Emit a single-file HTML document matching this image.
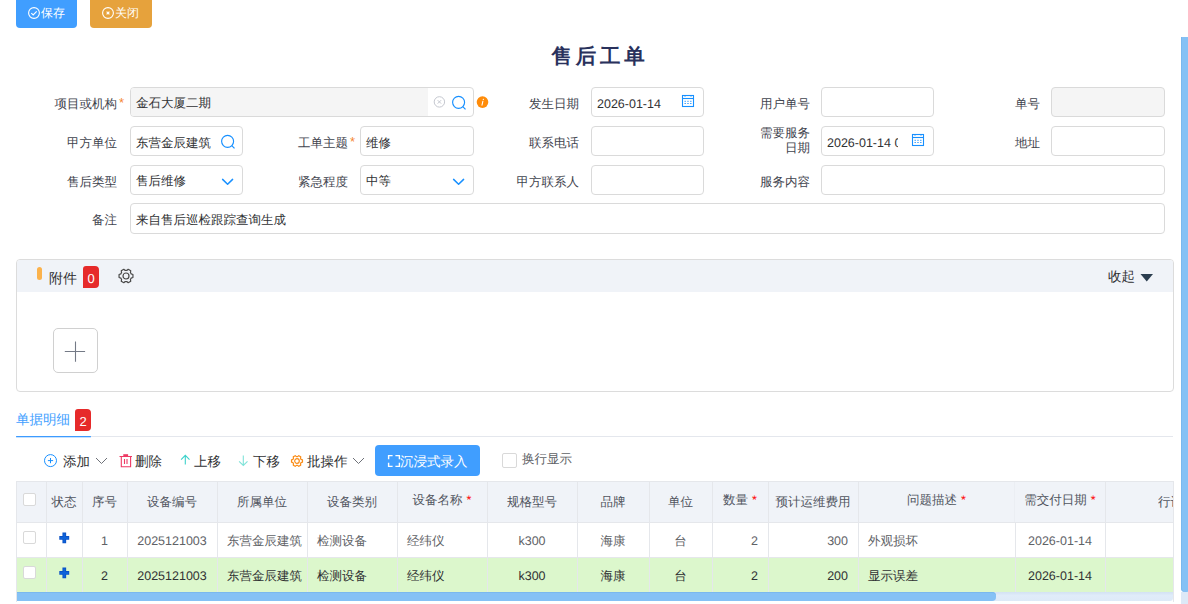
<!DOCTYPE html>
<html><head><meta charset="utf-8">
<style>
*{box-sizing:border-box}
html,body{margin:0;padding:0;width:1188px;height:604px;overflow:hidden;background:#fff}
body{font-family:"Liberation Sans",sans-serif;font-size:12.5px;text-rendering:geometricPrecision;color:#606266;position:relative}
.abs{position:absolute}
.btn{position:absolute;top:0;height:28px;border-radius:0 0 4px 4px;color:#fff;font-size:12px;line-height:27px;text-align:center}
.title{position:absolute;left:0;width:1188px;top:40px;text-align:center;font-size:20.5px;font-weight:bold;color:#29315c;letter-spacing:3.7px;line-height:30px}
.lbl{position:absolute;text-align:right;line-height:34px;height:30px;white-space:nowrap;color:#3f444e}
.req{color:#f5842c;position:absolute;font-size:13px}
.inp{position:absolute;height:30px;border:1px solid #dadada;border-radius:4px;background:#fff;line-height:32px;padding-left:5px;color:#303133;overflow:hidden;white-space:nowrap}
.dis{background:#f5f5f5}
.th{position:absolute;line-height:43px;color:#50555f;white-space:nowrap;overflow:hidden}
.td{position:absolute;line-height:39px;color:#606266;white-space:nowrap;overflow:hidden;padding:0 10px}
.cb{position:absolute;width:13px;height:13px;border:1px solid #d9d9d9;border-radius:2px;background:#fff}
.req-h{position:relative;top:-2px}
.req-h b{color:#f00;font-weight:normal;margin-left:4px}
.tb{top:447px;line-height:30px;font-size:13.5px;color:#303133}
</style></head><body>
<div class="btn" style="left:16px;width:61px;background:#409eff">
<svg class="abs" style="left:12px;top:7px" width="12" height="12" viewBox="0 0 12 12"><circle cx="6" cy="6" r="5.4" fill="none" stroke="#fff" stroke-width="1.1"/><path d="M3.3 6.2 L5.2 8 L8.7 4.4" fill="none" stroke="#fff" stroke-width="1.1"/></svg>
<span class="abs" style="left:25px;top:0">保存</span></div>
<div class="btn" style="left:90px;width:62px;background:#e6a23c">
<svg class="abs" style="left:12px;top:7px" width="12" height="12" viewBox="0 0 12 12"><circle cx="6" cy="6" r="5.4" fill="none" stroke="#fff" stroke-width="1.1"/><path d="M4.6 4.6 L7.4 7.4 M7.4 4.6 L4.6 7.4" fill="none" stroke="#fff" stroke-width="1.2"/></svg>
<span class="abs" style="left:25px;top:0">关闭</span></div>

<div class="title" style="left:6px;top:42px">售后工单</div>

<!-- row 1 -->
<div class="lbl" style="left:0;width:117px;top:87px">项目或机构</div><span class="req" style="left:119px;top:95px">*</span>
<div class="inp" style="left:130px;top:87px;width:344px"></div>
<div class="lbl" style="left:460px;width:119px;top:87px">发生日期</div>
<div class="inp" style="left:591px;top:87px;width:113px">2026-01-14</div>
<div class="lbl" style="left:700px;width:110px;top:87px">用户单号</div>
<div class="inp" style="left:821px;top:87px;width:113px"></div>
<div class="lbl" style="left:930px;width:110px;top:87px">单号</div>
<div class="inp dis" style="left:1051px;top:87px;width:114px"></div>

<!-- row 2 -->
<div class="lbl" style="left:0;width:117px;top:126px">甲方单位</div>
<div class="inp" style="left:130px;top:126px;width:113px">东营金辰建筑</div>
<div class="lbl" style="left:240px;width:108px;top:126px">工单主题</div><span class="req" style="left:350px;top:134px">*</span>
<div class="inp" style="left:360px;top:126px;width:114px">维修</div>
<div class="lbl" style="left:460px;width:119px;top:126px">联系电话</div>
<div class="inp" style="left:591px;top:126px;width:113px"></div>
<div class="lbl" style="left:700px;width:110px;top:126px;line-height:15px">需要服务<br>日期</div>
<div class="inp" style="left:821px;top:126px;width:113px"><span style="display:inline-block;width:71px;overflow:hidden;vertical-align:top">2026-01-14 00:00</span></div>
<div class="lbl" style="left:930px;width:110px;top:126px">地址</div>
<div class="inp" style="left:1051px;top:126px;width:114px"></div>

<!-- row 3 -->
<div class="lbl" style="left:0;width:117px;top:165px">售后类型</div>
<div class="inp" style="left:130px;top:165px;width:113px;line-height:30px">售后维修</div>
<div class="lbl" style="left:240px;width:108px;top:165px">紧急程度</div>
<div class="inp" style="left:360px;top:165px;width:114px;line-height:30px">中等</div>
<div class="lbl" style="left:460px;width:119px;top:165px">甲方联系人</div>
<div class="inp" style="left:591px;top:165px;width:113px"></div>
<div class="lbl" style="left:700px;width:110px;top:165px">服务内容</div>
<div class="inp" style="left:821px;top:165px;width:344px"></div>

<!-- row 4 -->
<div class="lbl" style="left:0;width:117px;top:203px">备注</div>
<div class="inp" style="left:130px;top:203px;width:1035px;height:31px">来自售后巡检跟踪查询生成</div>


<!-- input icons -->
<div class="abs" style="left:131px;top:88px;width:297px;height:28px;background:#f5f5f5;border-radius:3px 0 0 3px"></div>
<div class="abs" style="left:136px;top:88px;line-height:30px;color:#303133">金石大厦二期</div>
<svg class="abs" style="left:433px;top:96px" width="13" height="12" viewBox="0 0 13 12"><circle cx="6.4" cy="5.9" r="5.2" fill="none" stroke="#c4c7cf" stroke-width="1"/><path d="M4.7 4.2L8.1 7.6M8.1 4.2L4.7 7.6" stroke="#c4c7cf" stroke-width="1"/></svg>
<svg class="abs" style="left:451px;top:95px" width="16" height="16" viewBox="0 0 16 16"><circle cx="7.6" cy="7.3" r="6" fill="none" stroke="#1890ff" stroke-width="1.15"/><path d="M11.8 11.6L14.5 14.3" stroke="#1890ff" stroke-width="1.2"/></svg>
<svg class="abs" style="left:476px;top:96px" width="13" height="13" viewBox="0 0 13 13"><circle cx="6.5" cy="6.1" r="5.8" fill="#ff8c0a"/><path d="M7.4 3.2L7.3 3.6M6.9 5.2L6 9.2" stroke="#fff" stroke-width="1.05" stroke-linecap="round"/></svg>
<svg class="abs" style="left:681px;top:94px" width="14" height="14" viewBox="0 0 14 14"><rect x="1.5" y="1.5" width="11" height="11" fill="none" stroke="#1890ff" stroke-width="1.1"/><path d="M1.5 4.5H12.5" stroke="#1890ff" stroke-width="1.1"/><path d="M4 1V2.5M10 1V2.5" stroke="#1890ff" stroke-width="1.3"/><path d="M3.5 7.3h1.4M6.3 7.3h1.4M9.1 7.3h1.4M3.5 9.5h1.4M6.3 9.5h1.4M9.1 9.5h1.4" stroke="#1890ff" stroke-width="0.9"/></svg>
<svg class="abs" style="left:911px;top:133px" width="14" height="14" viewBox="0 0 14 14"><rect x="1.5" y="1.5" width="11" height="11" fill="none" stroke="#1890ff" stroke-width="1.1"/><path d="M1.5 4.5H12.5" stroke="#1890ff" stroke-width="1.1"/><path d="M4 1V2.5M10 1V2.5" stroke="#1890ff" stroke-width="1.3"/><path d="M3.5 7.3h1.4M6.3 7.3h1.4M9.1 7.3h1.4M3.5 9.5h1.4M6.3 9.5h1.4M9.1 9.5h1.4" stroke="#1890ff" stroke-width="0.9"/></svg>
<svg class="abs" style="left:220px;top:134px" width="16" height="16" viewBox="0 0 16 16"><circle cx="7.6" cy="7.3" r="6" fill="none" stroke="#1890ff" stroke-width="1.15"/><path d="M11.8 11.6L14.5 14.3" stroke="#1890ff" stroke-width="1.2"/></svg>
<svg class="abs" style="left:221px;top:177px" width="14" height="10" viewBox="0 0 14 10"><path d="M1.6 2.4L6.6 7.3L11.6 2.4" fill="none" stroke="#1890ff" stroke-width="1.5" stroke-linecap="round" stroke-linejoin="round"/></svg>
<svg class="abs" style="left:452px;top:177px" width="14" height="10" viewBox="0 0 14 10"><path d="M1.6 2.4L6.6 7.3L11.6 2.4" fill="none" stroke="#1890ff" stroke-width="1.5" stroke-linecap="round" stroke-linejoin="round"/></svg>

<!-- attachments panel -->
<div class="abs" style="left:16px;top:259px;width:1158px;height:133px;border:1px solid #dcdcdc;border-radius:4px;overflow:hidden">
  <div class="abs" style="left:0;top:0;width:1156px;height:32px;background:#f0f3f8"></div>
  <div class="abs" style="left:20px;top:7px;width:5px;height:13px;background:#fbb24c;border-radius:2.5px"></div>
  <div class="abs" style="left:32px;top:0;line-height:36px;font-size:14px;color:#303133">附件</div>
  <div class="abs" style="left:66px;top:6px;width:16px;height:22px;background:#e62a2a;border-radius:3px 4px 4px 0;color:#fff;font-size:13px;line-height:26px;text-align:center">0</div>
  <svg class="abs" style="left:100px;top:7px" width="18" height="18" viewBox="0 0 18 18"><path d="M14.19 6.90L15.94 7.52L15.94 10.48L14.19 11.10L13.41 12.45L13.75 14.28L11.19 15.75L9.78 14.55L8.22 14.55L6.81 15.75L4.25 14.28L4.59 12.45L3.81 11.10L2.06 10.48L2.06 7.52L3.81 6.90L4.59 5.55L4.25 3.72L6.81 2.25L8.22 3.45L9.78 3.45L11.19 2.25L13.75 3.72L13.41 5.55Z" fill="none" stroke="#4a4a4a" stroke-width="1.2" stroke-linejoin="round"/><circle cx="9" cy="9" r="3" fill="none" stroke="#4a4a4a" stroke-width="1.2"/></svg>
  <div class="abs" style="left:1091px;top:-1px;line-height:36px;font-size:13.5px;color:#303133">收起</div>
  <svg class="abs" style="left:1123px;top:13px" width="14" height="10" viewBox="0 0 14 10"><path d="M0.5 1H13L6.75 8.5z" fill="#2c3e50"/></svg>
  <div class="abs" style="left:36px;top:68px;width:45px;height:45px;border:1px solid #d0d0d0;border-radius:5px"></div>
  <svg class="abs" style="left:46px;top:79px" width="24" height="24" viewBox="0 0 24 24"><path d="M1.8 12.5H22.1M12.5 2.4V22.7" stroke="#747a86" stroke-width="1.1"/></svg>
</div>

<!-- tabs -->
<div class="abs" style="left:16px;top:405px;line-height:30px;font-size:13.5px;color:#409eff">单据明细</div>
<div class="abs" style="left:75px;top:409px;width:16px;height:22px;background:#e62a2a;border-radius:3px 4px 4px 0;color:#fff;font-size:13px;line-height:25px;text-align:center">2</div>
<div class="abs" style="left:16px;top:436px;width:1157px;height:1px;background:#e4e7ed"></div>
<div class="abs" style="left:16px;top:436px;width:75px;height:1px;background:#3d9bff;border-radius:1px;box-shadow:0 0.5px 0 #8cc4ff"></div>

<!-- toolbar -->
<svg class="abs" style="left:43px;top:453px" width="15" height="15" viewBox="0 0 15 15"><circle cx="7.5" cy="7.6" r="6" fill="none" stroke="#1890ff" stroke-width="1"/><path d="M7.5 5V10.2M4.9 7.6H10.1" stroke="#1890ff" stroke-width="1"/></svg>
<div class="abs tb" style="left:63px">添加</div>
<svg class="abs" style="left:95px;top:456px" width="13" height="9" viewBox="0 0 13 9"><path d="M1 2L6.5 7.5L12 2" fill="none" stroke="#6e7178" stroke-width="1"/></svg>
<svg class="abs" style="left:119px;top:453px" width="14" height="15" viewBox="0 0 14 15"><path d="M0.5 3.5H13M2.3 3.5V13.7H11.6V3.5M5.5 6V11M8 6V11" fill="none" stroke="#ee3a64" stroke-width="1.1"/><rect x="4.3" y="1.2" width="4.8" height="2.3" fill="#ee3a64"/></svg>
<div class="abs tb" style="left:135px">删除</div>
<svg class="abs" style="left:180px;top:454px" width="11" height="12" viewBox="0 0 11 12"><path d="M5.3 10.6V1.6M1.1 5.6L5.3 1.4L9.5 5.6" fill="none" stroke="#3cd2cb" stroke-width="1.1"/></svg>
<div class="abs tb" style="left:194px">上移</div>
<svg class="abs" style="left:238px;top:455px" width="11" height="12" viewBox="0 0 11 12"><path d="M5.3 0.6V10.4M1.1 6.3L5.3 10.5L9.5 6.3" fill="none" stroke="#80e3d9" stroke-width="1.1"/></svg>
<div class="abs tb" style="left:253px">下移</div>
<svg class="abs" style="left:290px;top:454px" width="14" height="14" viewBox="0 0 14 14"><path d="M11.08 5.35L12.48 5.84L12.48 8.16L11.08 8.65L10.47 9.71L10.75 11.16L8.73 12.33L7.61 11.36L6.39 11.36L5.27 12.33L3.25 11.16L3.53 9.71L2.92 8.65L1.52 8.16L1.52 5.84L2.92 5.35L3.53 4.29L3.25 2.84L5.27 1.67L6.39 2.64L7.61 2.64L8.73 1.67L10.75 2.84L10.47 4.29Z" fill="none" stroke="#fa8c16" stroke-width="1.2" stroke-linejoin="round"/><circle cx="7" cy="7" r="2.3" fill="none" stroke="#fa8c16" stroke-width="1.2"/></svg>
<div class="abs tb" style="left:307px">批操作</div>
<svg class="abs" style="left:352px;top:456px" width="13" height="9" viewBox="0 0 13 9"><path d="M1 2L6.5 7.5L12 2" fill="none" stroke="#6e7178" stroke-width="1"/></svg>
<div class="abs" style="left:375px;top:445px;width:105px;height:31px;background:#409eff;border-radius:4px"></div>
<svg class="abs" style="left:387px;top:454px" width="14" height="14" viewBox="0 0 14 14"><path d="M1.6 5.2V1.6H5.6M8.4 1.6H12.4V5.2M12.4 8.8V12.4H8.4M5.6 12.4H1.6V8.8" fill="none" stroke="#fff" stroke-width="1.4"/></svg>
<div class="abs tb" style="left:400px;color:#fff">沉浸式录入</div>
<div class="abs" style="left:502px;top:453px;width:15px;height:15px;border:1px solid #d9d9d9;border-radius:2px;background:#fff"></div>
<div class="abs" style="left:522px;top:444px;line-height:30px;color:#606266">换行显示</div>

<!-- table -->
<div class="abs" style="left:16px;top:481px;width:1158px;height:121px;overflow:hidden">
<div class="abs" style="left:0;top:0;width:1157px;height:41px;background:#f0f3f8"></div>
<div class="abs" style="left:0;top:76px;width:1157px;height:35px;background:#dcf7cc"></div>
<div class="th" style="left:0px;top:0px;width:30px;height:41px;text-align:center"><span class="cb" style="left:7px;top:12px"></span></div>
<div class="th" style="left:30px;top:0px;width:36px;height:41px;text-align:center">状态</div>
<div class="th" style="left:66px;top:0px;width:45px;height:41px;text-align:center">序号</div>
<div class="th" style="left:111px;top:0px;width:90px;height:41px;text-align:center">设备编号</div>
<div class="th" style="left:201px;top:0px;width:90px;height:41px;text-align:center">所属单位</div>
<div class="th" style="left:291px;top:0px;width:90px;height:41px;text-align:center">设备类别</div>
<div class="th" style="left:381px;top:0px;width:90px;height:41px;text-align:center"><span class="req-h">设备名称<b>*</b></span></div>
<div class="th" style="left:471px;top:0px;width:90px;height:41px;text-align:center">规格型号</div>
<div class="th" style="left:561px;top:0px;width:72px;height:41px;text-align:center">品牌</div>
<div class="th" style="left:633px;top:0px;width:63px;height:41px;text-align:center">单位</div>
<div class="th" style="left:696px;top:0px;width:56px;height:41px;text-align:center"><span class="req-h">数量<b>*</b></span></div>
<div class="th" style="left:752px;top:0px;width:90px;height:41px;text-align:center">预计运维费用</div>
<div class="th" style="left:842px;top:0px;width:157px;height:41px;text-align:center"><span class="req-h">问题描述<b>*</b></span></div>
<div class="th" style="left:999px;top:0px;width:90px;height:41px;text-align:center"><span class="req-h">需交付日期<b>*</b></span></div>
<div class="th" style="left:1142px;top:0px;width:80px;height:41px;text-align:left">行设置</div>
<div class="td" style="left:0px;top:41px;width:30px;height:35px;text-align:center"><span class="cb" style="left:7px;top:9px"></span></div>
<div class="td" style="left:30px;top:41px;width:36px;height:35px;text-align:center"><svg class="abs" style="left:12px;top:10px" width="13" height="12" viewBox="0 0 13 12"><path d="M6.3 0.6V11.2M1.3 5.9H11.2" stroke="#0a52c6" stroke-width="3.7"/><path d="M6.3 1.4V10.4M2.1 5.9H10.4" stroke="#0e63d9" stroke-width="2"/></svg></div>
<div class="td" style="left:66px;top:41px;width:45px;height:35px;text-align:center">1</div>
<div class="td" style="left:111px;top:41px;width:90px;height:35px;text-align:center">2025121003</div>
<div class="td" style="left:201px;top:41px;width:90px;height:35px;text-align:center">东营金辰建筑</div>
<div class="td" style="left:291px;top:41px;width:90px;height:35px;text-align:left">检测设备</div>
<div class="td" style="left:381px;top:41px;width:90px;height:35px;text-align:left">经纬仪</div>
<div class="td" style="left:471px;top:41px;width:90px;height:35px;text-align:center">k300</div>
<div class="td" style="left:561px;top:41px;width:72px;height:35px;text-align:center">海康</div>
<div class="td" style="left:633px;top:41px;width:63px;height:35px;text-align:center">台</div>
<div class="td" style="left:696px;top:41px;width:56px;height:35px;text-align:right">2</div>
<div class="td" style="left:752px;top:41px;width:90px;height:35px;text-align:right">300</div>
<div class="td" style="left:842px;top:41px;width:157px;height:35px;text-align:left">外观损坏</div>
<div class="td" style="left:999px;top:41px;width:90px;height:35px;text-align:center">2026-01-14</div>
<div class="td" style="left:1089px;top:41px;width:95px;height:35px;text-align:center"></div>
<div class="td" style="color:#303133;left:0px;top:76px;width:30px;height:35px;text-align:center"><span class="cb" style="left:7px;top:9px"></span></div>
<div class="td" style="color:#303133;left:30px;top:76px;width:36px;height:35px;text-align:center"><svg class="abs" style="left:12px;top:10px" width="13" height="12" viewBox="0 0 13 12"><path d="M6.3 0.6V11.2M1.3 5.9H11.2" stroke="#0a52c6" stroke-width="3.7"/><path d="M6.3 1.4V10.4M2.1 5.9H10.4" stroke="#0e63d9" stroke-width="2"/></svg></div>
<div class="td" style="color:#303133;left:66px;top:76px;width:45px;height:35px;text-align:center">2</div>
<div class="td" style="color:#303133;left:111px;top:76px;width:90px;height:35px;text-align:center">2025121003</div>
<div class="td" style="color:#303133;left:201px;top:76px;width:90px;height:35px;text-align:center">东营金辰建筑</div>
<div class="td" style="color:#303133;left:291px;top:76px;width:90px;height:35px;text-align:left">检测设备</div>
<div class="td" style="color:#303133;left:381px;top:76px;width:90px;height:35px;text-align:left">经纬仪</div>
<div class="td" style="color:#303133;left:471px;top:76px;width:90px;height:35px;text-align:center">k300</div>
<div class="td" style="color:#303133;left:561px;top:76px;width:72px;height:35px;text-align:center">海康</div>
<div class="td" style="color:#303133;left:633px;top:76px;width:63px;height:35px;text-align:center">台</div>
<div class="td" style="color:#303133;left:696px;top:76px;width:56px;height:35px;text-align:right">2</div>
<div class="td" style="color:#303133;left:752px;top:76px;width:90px;height:35px;text-align:right">200</div>
<div class="td" style="color:#303133;left:842px;top:76px;width:157px;height:35px;text-align:left">显示误差</div>
<div class="td" style="color:#303133;left:999px;top:76px;width:90px;height:35px;text-align:center">2026-01-14</div>
<div class="td" style="color:#303133;left:1089px;top:76px;width:95px;height:35px;text-align:center"></div>
<div class="abs" style="left:30px;top:0;width:1px;height:111px;background:#e5e7eb"></div>
<div class="abs" style="left:66px;top:0;width:1px;height:111px;background:#e5e7eb"></div>
<div class="abs" style="left:111px;top:0;width:1px;height:111px;background:#e5e7eb"></div>
<div class="abs" style="left:201px;top:0;width:1px;height:111px;background:#e5e7eb"></div>
<div class="abs" style="left:291px;top:0;width:1px;height:111px;background:#e5e7eb"></div>
<div class="abs" style="left:381px;top:0;width:1px;height:111px;background:#e5e7eb"></div>
<div class="abs" style="left:471px;top:0;width:1px;height:111px;background:#e5e7eb"></div>
<div class="abs" style="left:561px;top:0;width:1px;height:111px;background:#e5e7eb"></div>
<div class="abs" style="left:633px;top:0;width:1px;height:111px;background:#e5e7eb"></div>
<div class="abs" style="left:696px;top:0;width:1px;height:111px;background:#e5e7eb"></div>
<div class="abs" style="left:752px;top:0;width:1px;height:111px;background:#e5e7eb"></div>
<div class="abs" style="left:842px;top:0;width:1px;height:111px;background:#e5e7eb"></div>
<div class="abs" style="left:998px;top:0;width:1px;height:41px;background:#ebeef3"></div><div class="abs" style="left:999px;top:41px;width:1px;height:70px;background:#e5e7eb"></div>
<div class="abs" style="left:1089px;top:0;width:1px;height:111px;background:#e5e7eb"></div>
<div class="abs" style="left:0;top:0;width:1157px;height:1px;background:#e5e7eb"></div>
<div class="abs" style="left:0;top:41px;width:1157px;height:1px;background:#e5e7eb"></div>
<div class="abs" style="left:0;top:76px;width:1157px;height:1px;background:#e5e7eb"></div>
<div class="abs" style="left:0;top:0;width:1px;height:123px;background:#e5e7eb"></div>
<div class="abs" style="left:1157px;top:0;width:1px;height:123px;background:#e5e7eb"></div>
<div class="abs" style="left:1px;top:111px;width:1156px;height:9px;background:linear-gradient(#d3e2f3,#e0ecf9 40%,#ddeaf8);border-radius:0 0 3px 0"></div>
<div class="abs" style="left:1px;top:111px;width:979px;height:9px;background:#85c1f5;border-radius:0 4px 4px 0;box-shadow:inset 0 1px 0 #7ab8ee"></div>
</div>

<!-- scrollbar -->
<div class="abs" style="left:1181px;top:592px;width:7px;height:12px;background:#dde9f7"></div>
<div class="abs" style="left:1181px;top:37px;width:9px;height:555px;background:#85c1f5;border-radius:0 0 4px 4px;box-shadow:inset 1px 0 0 #7ab8ee"></div>

</body></html>
